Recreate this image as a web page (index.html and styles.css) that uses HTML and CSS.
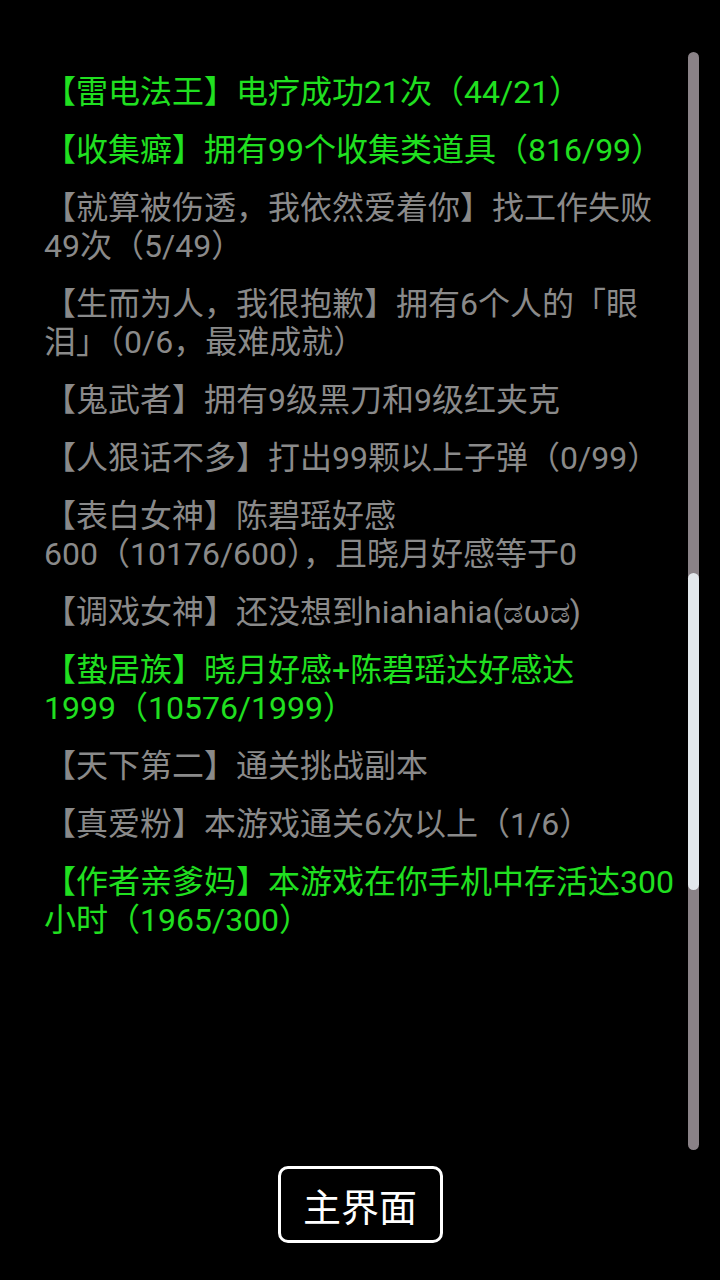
FILE: index.html
```html
<!DOCTYPE html>
<html lang="zh-CN">
<head>
  <meta charset="UTF-8" />
  <meta name="viewport" content="width=device-width, initial-scale=1.0" />
  <title>成就</title>
  <link rel="stylesheet" href="styles.css">
</head>
<body>
  <div class="page">
    <div class="panel">
      <ul class="list">
        <li class="done">【雷电法王】电疗成功21次（44/21）</li>
        <li class="done">【收集癖】拥有99个收集类道具（816/99）</li>
        <li>【就算被伤透，我依然爱着你】找工作失败<br>49次（5/49）</li>
        <li>【生而为人，我很抱歉】拥有6个人的「眼<br>泪」（0/6，最难成就）</li>
        <li>【鬼武者】拥有9级黑刀和9级红夹克</li>
        <li>【人狠话不多】打出99颗以上子弹（0/99）</li>
        <li>【表白女神】陈碧瑶好感<br>600（10176/600），且晓月好感等于0</li>
        <li>【调戏女神】还没想到hiahiahia(ಡωಡ)</li>
        <li class="done">【蛰居族】晓月好感+陈碧瑶达好感达<br>1999（10576/1999）</li>
        <li>【天下第二】通关挑战副本</li>
        <li>【真爱粉】本游戏通关6次以上（1/6）</li>
        <li class="done">【作者亲爹妈】本游戏在你手机中存活达300<br>小时（1965/300）</li>
      </ul>
      <div class="track">
        <div class="thumb"></div>
      </div>
    </div>
    <div class="footer">
      <button class="home">主界面</button>
    </div>
  </div>
</body>
</html>
```

FILE: styles.css
```css
* {
  margin: 0;
  padding: 0;
  box-sizing: border-box;
}

body {
  background: #000;
  font-family: Roboto, "Noto Sans CJK SC", sans-serif;
}

.page {
  width: 720px;
  height: 1280px;
  display: flex;
  flex-direction: column;
}

.panel {
  display: flex;
  height: 1098px;
  margin-top: 52px;
  padding-left: 44px;
  padding-right: 21px;
}

.list {
  list-style: none;
  flex: 1;
  padding-top: 21px;
  font-size: 32px;
  line-height: 38px;
  color: #8a8a8a;
}

.list li {
  margin-bottom: 20px;
  white-space: nowrap;
}

.list li.done {
  color: #20e020;
}

.track {
  width: 11px;
  border-radius: 6px;
  background: #8a8287;
}

.thumb {
  margin-top: 521px;
  height: 317px;
  border-radius: 6px;
  background: #e3e8ec;
}

.footer {
  display: flex;
  justify-content: center;
  padding-top: 16px;
}

.home {
  width: 165px;
  height: 77px;
  border: 3px solid #fff;
  border-radius: 10px;
  background: #000;
  color: #fff;
  font-family: Roboto, "Noto Sans CJK SC", sans-serif;
  font-size: 38px;
}
```
